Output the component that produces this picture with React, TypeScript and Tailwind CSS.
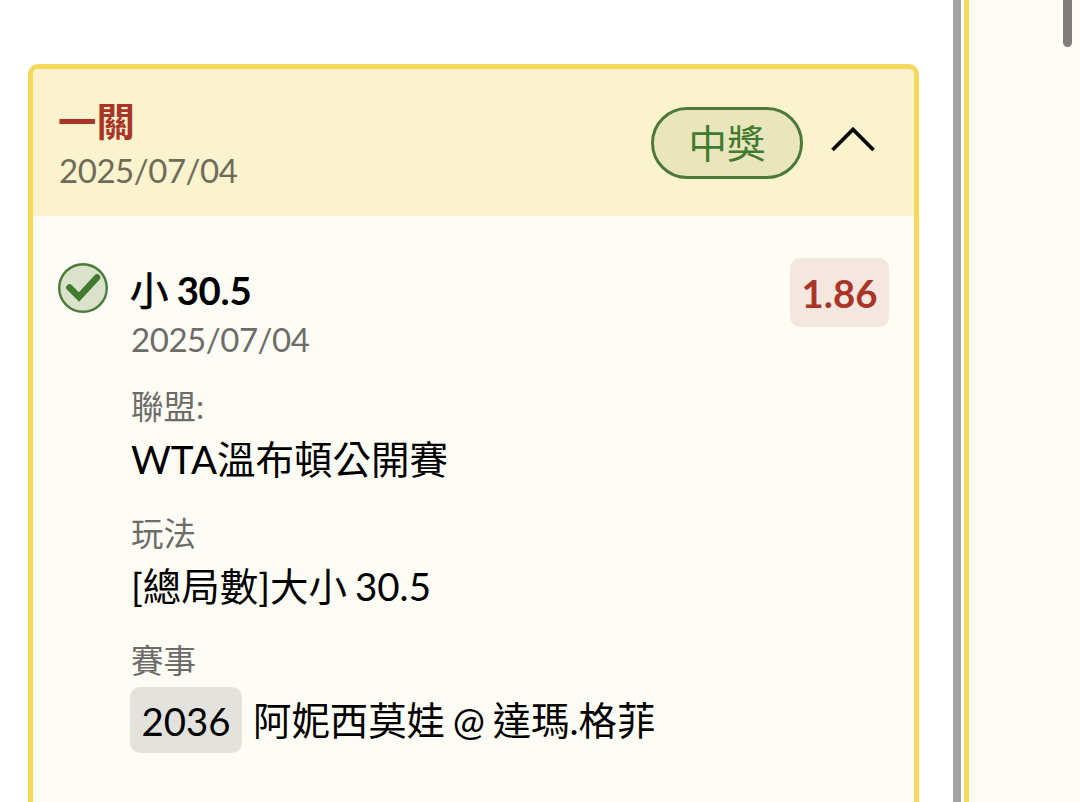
const details = [
  { label: "聯盟:", value: "WTA溫布頓公開賽" },
  { label: "玩法", value: "[總局數]大小 30.5" },
];

function ChevronUp() {
  return (
    <svg className="ml-[27px] mb-[7px] h-[28px] w-[46px]" viewBox="0 0 46 28" fill="none" stroke="#0a0a0a" strokeWidth="3.8">
      <path d="M2.5 25L23 4.5 43.5 25" />
    </svg>
  );
}

function WonIcon() {
  return (
    <svg className="h-[50px] w-[50px] shrink-0" viewBox="0 0 50 50" fill="none">
      <circle cx="25" cy="25" r="23.8" fill="#dae2cc" stroke="#4b7a3a" strokeWidth="2.4" />
      <path d="M11.5 24.5l9.5 9.5L39 14.5" stroke="#427a2f" strokeWidth="6.6" strokeLinecap="round" />
    </svg>
  );
}

export default function App() {
  return (
    <div className="flex h-[802px] w-[1080px] overflow-hidden bg-white font-['Lato','Noto_Sans_CJK_TC',sans-serif] text-black">
      <div className="w-[953px] pl-7 pt-16">
        {/* Ticket */}
        <section className="h-[760px] w-[891px] overflow-hidden rounded-[10px] border-5 border-[#f5d95c] bg-[#fefdf5]">
          <header className="flex h-[147px] items-center justify-between bg-[#fbf2ce] pl-[26px] pr-[38px]">
            <div className="pt-1">
              <h2 className="-ml-px h-[49px] text-[38.4px] leading-[46px] font-bold text-[#a93529]">一關</h2>
              <p className="h-[44px] text-[33px] leading-[46px] tracking-[-0.45px] text-[#6f6b59]">2025/07/04</p>
            </div>
            <div className="flex items-center">
              <span className="flex h-[72px] w-[152px] items-center justify-center rounded-full border-3 border-[#4b7a3a] bg-[#e9e6be] pt-[2px] text-[38.4px] leading-none text-[#427a2f]">
                中獎
              </span>
              <ChevronUp />
            </div>
          </header>

          {/* Selection */}
          <div className="flex items-start pl-[25px] pr-[25px] pt-[42px]">
            <div className="pt-[5px]">
              <WonIcon />
            </div>
            <div className="ml-[22px] flex-1">
              <h3 className="mt-[8px] h-[47px] text-[38.4px] leading-[48px] tracking-[-0.3px] [word-spacing:-1px]">
                <span className="[-webkit-text-stroke:0.7px_black]">小</span> <span className="font-bold">30.5</span>
              </h3>
              <p className="h-[52px] pl-px text-[33px] leading-[52px] tracking-[-0.45px] text-[#6d6c69]">2025/07/04</p>
              <dl className="mt-[18px] [word-spacing:-2px]">
                {details.map((item) => (
                  <div key={item.label} className="mb-[25px] pl-px">
                    <dt className="h-[50px] text-[32.5px] leading-[48px] text-[#6d6c69]">{item.label}</dt>
                    <dd className="h-[52px] text-[38.5px] leading-[52px]">{item.value}</dd>
                  </div>
                ))}
                <div>
                  <dt className="h-[49px] pl-px text-[32.5px] leading-[48px] text-[#6d6c69]">賽事</dt>
                  <dd className="flex items-center text-[38.4px] leading-[68px]">
                    <span className="mr-[11px] h-[66px] w-[112px] rounded-[10px] bg-[#e3e2dc] text-center">2036</span>
                    阿妮西莫娃 @ 達瑪.格菲
                  </dd>
                </div>
              </dl>
            </div>
            <span className="h-[69px] w-[99px] rounded-[10px] bg-[#f4e7e0] text-center text-[38.4px] leading-[70px] font-bold text-[#a93529]">
              1.86
            </span>
          </div>
        </section>
      </div>

      {/* Neighbouring panel */}
      <div className="w-2 bg-[#a3a4a3]" />
      <div className="ml-[3px] flex flex-1 justify-end border-l-5 border-[#f5d95c] bg-[#fefdf5] pr-2">
        <div className="h-[47px] w-[9px] rounded-b-full bg-[#7f7e7b]" />
      </div>
    </div>
  );
}
